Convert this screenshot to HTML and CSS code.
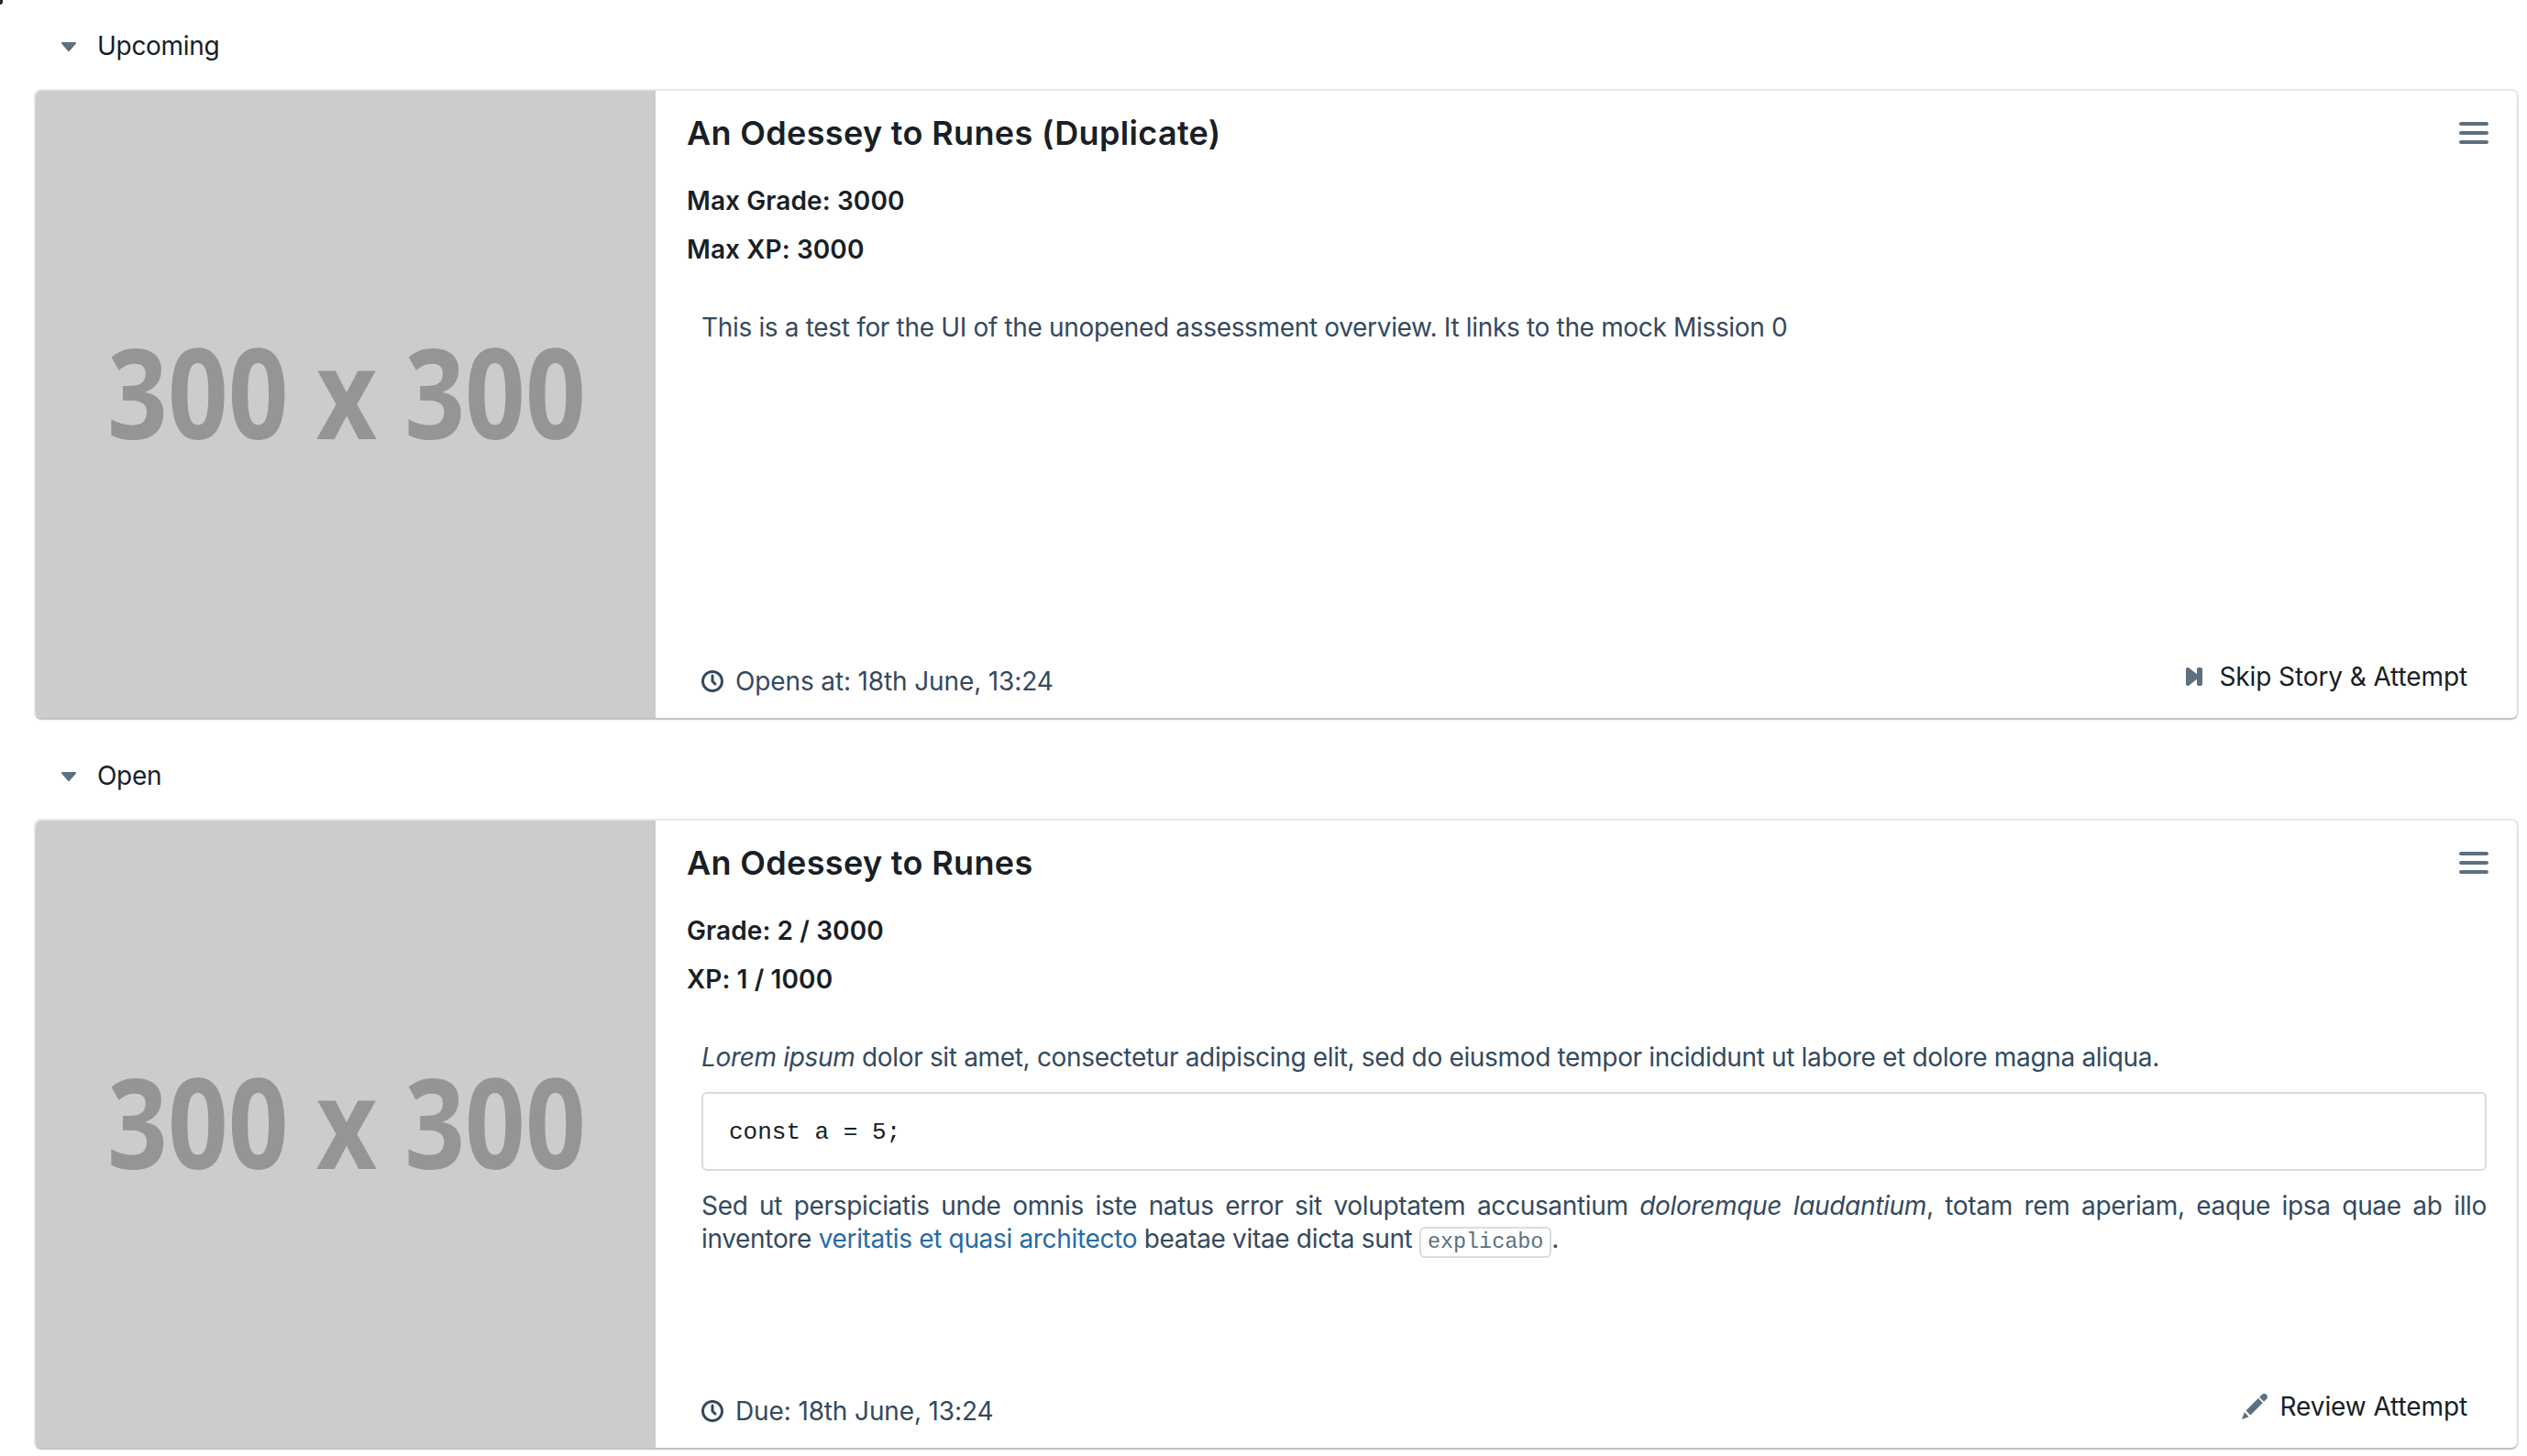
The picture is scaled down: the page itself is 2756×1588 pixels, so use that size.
FILE: index.html
```html
<!DOCTYPE html>
<html lang="en">

<head>
    <meta charset="UTF-8">
    <title>Missions</title>
    <link rel="stylesheet" href="styles.css">
</head>

<body>
    <section class="group">
        <div class="group-head">
            <svg class="icon caret" viewBox="0 0 16 16"><path d="M12 6.5c0-.28-.22-.5-.5-.5h-7a.495.495 0 00-.37.83l3.5 4c.09.1.22.17.37.17s.28-.07.37-.17l3.5-4c.08-.09.13-.2.13-.33z"/></svg>
            <span>Upcoming</span>
        </div>
        <article class="card">
            <div class="thumb"><span class="thumb-text">300 x 300</span></div>
            <div class="card-body">
                <div class="title-row">
                    <h4>An Odessey to Runes (Duplicate)</h4>
                    <svg class="icon menu" viewBox="0 0 16 16"><path d="M1 4h14c.55 0 1-.45 1-1s-.45-1-1-1H1c-.55 0-1 .45-1 1s.45 1 1 1zm14 3H1c-.55 0-1 .45-1 1s.45 1 1 1h14c.55 0 1-.45 1-1s-.45-1-1-1zm0 5H1c-.55 0-1 .45-1 1s.45 1 1 1h14c.55 0 1-.45 1-1s-.45-1-1-1z"/></svg>
                </div>
                <h6>Max Grade: 3000</h6>
                <h6>Max XP: 3000</h6>
                <div class="desc">
                    <p>This is a test for the UI of the unopened assessment overview. It links to the mock Mission 0</p>
                </div>
                <div class="card-foot">
                    <div class="when">
                        <svg class="icon clock" viewBox="0 0 16 16"><path d="M8 0C3.58 0 0 3.58 0 8s3.58 8 8 8 8-3.58 8-8-3.58-8-8-8zm0 14c-3.31 0-6-2.69-6-6s2.69-6 6-6 6 2.69 6 6-2.69 6-6 6zm1-6.41V4c0-.55-.45-1-1-1s-1 .45-1 1v4c0 .28.11.53.29.71l2 2a1.003 1.003 0 001.42-1.42L9 7.59z"/></svg>
                        <span>Opens at: 18th June, 13:24</span>
                    </div>
                    <a class="action">
                        <svg class="icon" viewBox="0 0 16 16"><path d="M12 3h-1c-.55 0-1 .45-1 1v2.59L5.71 3.3A.97.97 0 005 3c-.55 0-1 .45-1 1v8c0 .55.45 1 1 1 .28 0 .53-.11.71-.29L10 9.41V12c0 .55.45 1 1 1h1c.55 0 1-.45 1-1V4c0-.55-.45-1-1-1z"/></svg>
                        <span>Skip Story &amp; Attempt</span>
                    </a>
                </div>
            </div>
        </article>
    </section>

    <section class="group">
        <div class="group-head">
            <svg class="icon caret" viewBox="0 0 16 16"><path d="M12 6.5c0-.28-.22-.5-.5-.5h-7a.495.495 0 00-.37.83l3.5 4c.09.1.22.17.37.17s.28-.07.37-.17l3.5-4c.08-.09.13-.2.13-.33z"/></svg>
            <span>Open</span>
        </div>
        <article class="card">
            <div class="thumb"><span class="thumb-text">300 x 300</span></div>
            <div class="card-body">
                <div class="title-row">
                    <h4>An Odessey to Runes</h4>
                    <svg class="icon menu" viewBox="0 0 16 16"><path d="M1 4h14c.55 0 1-.45 1-1s-.45-1-1-1H1c-.55 0-1 .45-1 1s.45 1 1 1zm14 3H1c-.55 0-1 .45-1 1s.45 1 1 1h14c.55 0 1-.45 1-1s-.45-1-1-1zm0 5H1c-.55 0-1 .45-1 1s.45 1 1 1h14c.55 0 1-.45 1-1s-.45-1-1-1z"/></svg>
                </div>
                <h6>Grade: 2 / 3000</h6>
                <h6>XP: 1 / 1000</h6>
                <div class="desc">
                    <p><em>Lorem ipsum</em> dolor sit amet, consectetur adipiscing elit, sed do eiusmod tempor incididunt ut labore et dolore magna aliqua.</p>
                    <pre>const a = 5;</pre>
                    <p class="justify">Sed ut perspiciatis unde omnis iste natus error sit voluptatem accusantium <em>doloremque laudantium</em>, totam rem aperiam, eaque ipsa quae ab illo inventore <a class="link">veritatis et quasi architecto</a> beatae vitae dicta sunt <code>explicabo</code>.</p>
                </div>
                <div class="card-foot">
                    <div class="when">
                        <svg class="icon clock" viewBox="0 0 16 16"><path d="M8 0C3.58 0 0 3.58 0 8s3.58 8 8 8 8-3.58 8-8-3.58-8-8-8zm0 14c-3.31 0-6-2.69-6-6s2.69-6 6-6 6 2.69 6 6-2.69 6-6 6zm1-6.41V4c0-.55-.45-1-1-1s-1 .45-1 1v4c0 .28.11.53.29.71l2 2a1.003 1.003 0 001.42-1.42L9 7.59z"/></svg>
                        <span>Due: 18th June, 13:24</span>
                    </div>
                    <a class="action">
                        <svg class="icon" viewBox="0 0 16 16"><path d="M3.25 10.26l2.47 2.47 6.69-6.69-2.46-2.48-6.7 6.7zM.99 14.99l3.86-1.39-2.46-2.44-1.4 3.83zm12.25-14c-.48 0-.92.2-1.24.51l-1.44 1.44 2.47 2.47 1.44-1.44c.32-.32.51-.75.51-1.24.01-.95-.77-1.74-1.74-1.74z"/></svg>
                        <span>Review Attempt</span>
                    </a>
                </div>
            </div>
        </article>
    </section>
</body>

</html>
```

FILE: styles.css
```css
* {
    box-sizing: border-box;
}

html,
body {
    height: 100%;
    overflow: hidden;
}

body {
    margin: 0;
    padding: 22px 11px 0 39px;
    background: #fff;
    color: #182026;
    font-family: Inter, "Noto Sans", sans-serif;
    font-size: 28px;
    line-height: 36px;
}

/* dark speck left in the window corner */
body::before {
    content: '';
    position: absolute;
    top: 0;
    left: 0;
    width: 3px;
    height: 5px;
    background: #1d2a38;
    border-bottom-right-radius: 3px;
}

.group {
    margin-bottom: 35px;
}

.group-head {
    display: flex;
    align-items: center;
    gap: 15px;
    height: 56px;
    margin-bottom: 21px;
    padding-left: 20px;
    letter-spacing: -0.3px;
}

.icon {
    width: 32px;
    height: 32px;
    fill: #5c7080;
    flex: none;
}

.card {
    display: flex;
    height: 684px;
    border-radius: 6px;
    overflow: hidden;
    box-shadow: 0 0 0 2px rgba(16, 22, 26, 0.1), 0 2px 2px rgba(16, 22, 26, 0.2);
}

.thumb {
    width: 676px;
    flex: none;
    display: flex;
    align-items: center;
    justify-content: center;
    padding: 0 0 28px 2px;
    background: #cccccc;
}

.thumb-text {
    font-family: "Open Sans", sans-serif;
    font-weight: 700;
    font-size: 136px;
    line-height: 1;
    color: #959595;
    white-space: nowrap;
    transform: scaleX(0.847);
}

.card-body {
    flex: 1;
    min-width: 0;
    display: flex;
    flex-direction: column;
    padding: 24px 31px 22px 34px;
}

.title-row {
    display: flex;
    justify-content: space-between;
    align-items: center;
    margin-bottom: 34px;
}

h4 {
    margin: 0;
    font-size: 36px;
    line-height: 44px;
    font-weight: 600;
    letter-spacing: 0.34px;
}

h6 {
    margin: 0 0 17px;
    font-size: 28px;
    line-height: 36px;
    font-weight: 600;
    letter-spacing: 0.1px;
}

.desc {
    flex: 1;
    padding: 32px 2px 0 16px;
    color: #34495e;
    letter-spacing: -0.33px;
}

.desc p {
    margin: 0;
}

.justify {
    text-align: justify;
}

pre {
    margin: 20px 0;
    padding: 26px 28px 24px;
    border: 2px solid #dcdcdc;
    border-radius: 6px;
    background: #fff;
    color: #182026;
    font-family: "Liberation Mono", monospace;
    font-size: 26px;
    line-height: 32px;
    letter-spacing: 0;
}

code {
    padding: 4px 9px;
    border-radius: 6px;
    box-shadow: inset 0 0 0 2px #dcdcdc;
    color: #5c7080;
    font-family: "Liberation Mono", monospace;
    font-size: 23.4px;
    letter-spacing: 0;
}

.link {
    color: #286ba3;
}

.card-foot {
    display: flex;
    justify-content: space-between;
    align-items: center;
    padding: 0 23px 0 16px;
}

.when {
    display: flex;
    align-items: center;
    gap: 13px;
    color: #34495e;
    padding-top: 10px;
    letter-spacing: -0.13px;
}

.clock {
    width: 24px;
    height: 24px;
    fill: #34495e;
}

.action {
    display: flex;
    align-items: center;
    gap: 12px;
    letter-spacing: -0.1px;
}
```
